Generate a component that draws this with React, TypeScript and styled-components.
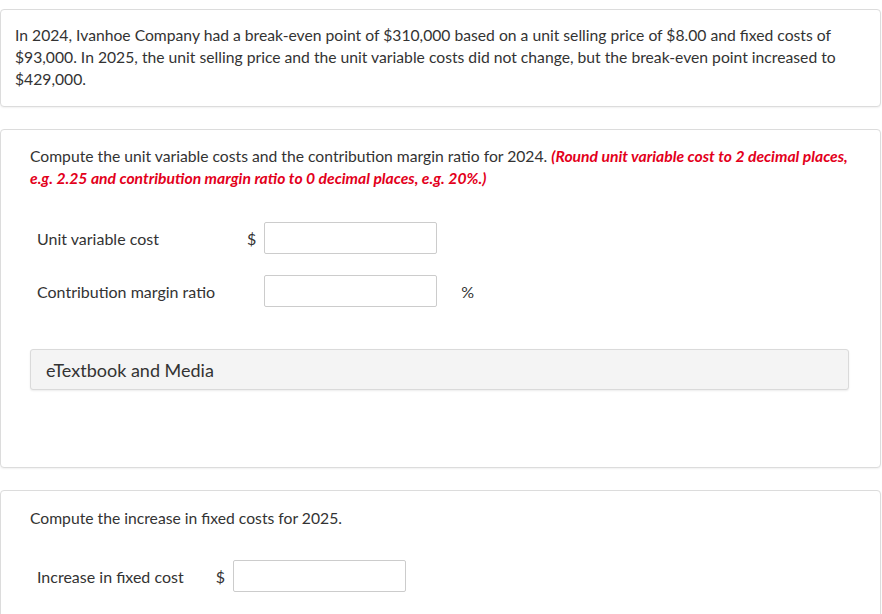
import React from "react";
import styled, { createGlobalStyle } from "styled-components";

const Global = createGlobalStyle`
  html, body { margin: 0; padding: 0; background: #fff; }
  body { font-family: Lato, "Open Sans", sans-serif; color: #333; font-size: 16px; }
`;

const Page = styled.div`
  display: flex;
  flex-direction: column;
  gap: 22px;
  padding-top: 9px;
  width: 881px;
`;

const Card = styled.section<{ $pad: string }>`
  border: 1px solid #dcdcdc;
  border-radius: 4px;
  box-shadow: 0 1px 2px rgba(0, 0, 0, 0.06);
  padding: ${(p) => p.$pad};
  background: #fff;
`;

const Para = styled.p`
  margin: 0;
  line-height: 22px;
  font-size: 15.7px;
`;

const Hint = styled.span`
  color: #e3001b;
  font-weight: 700;
  font-style: italic;
`;

const Table = styled.table<{ $top: number }>`
  border-collapse: collapse;
  margin: ${(p) => p.$top}px 0 0 7px;
`;

const Row = styled.tr``;

const Gap = styled.tr`
  height: 21px;
`;

const Label = styled.td`
  padding: 0 32px 0 0;
  font-size: 16px;
  white-space: nowrap;
  vertical-align: middle;
`;

const Sign = styled.td<{ $left?: number }>`
  padding: 0 8px 0 ${(p) => p.$left ?? 0}px;
  width: 9px;
  font-size: 16px;
  vertical-align: middle;
`;

const Field = styled.td`
  padding: 0;
`;

const Input = styled.input`
  display: block;
  box-sizing: border-box;
  width: 173px;
  height: 32px;
  border: 1px solid #ccc;
  border-radius: 2px;
  font-family: Lato, sans-serif;
  font-size: 16px;
  padding: 0 6px;
  outline: none;
`;

const Media = styled.div`
  margin: 42px 11px 0 0;
  background: #f4f4f4;
  border: 1px solid #dadada;
  border-radius: 3px;
  box-shadow: 0 1px 2px rgba(0, 0, 0, 0.08);
  height: 39px;
  display: flex;
  align-items: center;
  padding-left: 15px;
  font-size: 18px;
  color: #333;
`;

export default function App() {
  return (
    <>
      <Global />
      <Page>
        <Card $pad="14px 30px 16px 14px">
          <Para>
            In 2024, Ivanhoe Company had a break-even point of $310,000 based on a unit selling price of $8.00 and fixed costs of
            $93,000. In 2025, the unit selling price and the unit variable costs did not change, but the break-even point increased to
            $429,000.
          </Para>
        </Card>
        <Card $pad="15px 20px 77px 29px">
          <Para>
            Compute the unit variable costs and the contribution margin ratio for 2024.{" "}
            <Hint>
              (Round unit variable cost to 2 decimal places, e.g. 2.25 and contribution margin ratio to 0 decimal places, e.g. 20%.)
            </Hint>
          </Para>
          <Table $top={33}>
            <tbody>
              <Row>
                <Label>Unit variable cost</Label>
                <Sign>$</Sign>
                <Field>
                  <Input type="text" />
                </Field>
                <td />
              </Row>
              <Gap />
              <Row>
                <Label>Contribution margin ratio</Label>
                <Sign />
                <Field>
                  <Input type="text" />
                </Field>
                <Sign $left={24}>%</Sign>
              </Row>
            </tbody>
          </Table>
          <Media>eTextbook and Media</Media>
        </Card>
        <Card $pad="16px 31px 30px 29px">
          <Para>Compute the increase in fixed costs for 2025.</Para>
          <Table $top={31}>
            <tbody>
              <Row>
                <Label>Increase in fixed cost</Label>
                <Sign>$</Sign>
                <Field>
                  <Input type="text" />
                </Field>
              </Row>
            </tbody>
          </Table>
        </Card>
      </Page>
    </>
  );
}
